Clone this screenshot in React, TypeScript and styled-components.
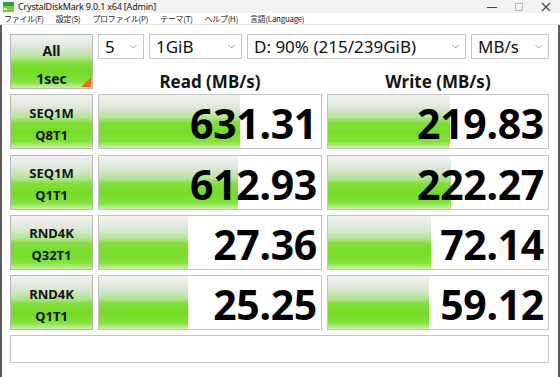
import React from "react"
import styled, { createGlobalStyle } from "styled-components"

const GlobalStyle = createGlobalStyle`
    html, body {
        margin: 0;
        padding: 0;
        background: #ffffff;
    }
    body {
        font-family: "Noto Sans", "Noto Sans CJK JP", sans-serif;
    }
`

type Result = {
    name: string
    sub: string
    read: string
    write: string
    readBar: number
    writeBar: number
}

const results: Result[] = [
    { name: "SEQ1M", sub: "Q8T1", read: "631.31", write: "219.83", readBar: 63.5, writeBar: 55.5 },
    { name: "SEQ1M", sub: "Q1T1", read: "612.93", write: "222.27", readBar: 62.5, writeBar: 56 },
    { name: "RND4K", sub: "Q32T1", read: "27.36", write: "72.14", readBar: 40, writeBar: 47 },
    { name: "RND4K", sub: "Q1T1", read: "25.25", write: "59.12", readBar: 40, writeBar: 46 },
]

const menus = ["ファイル(F)", "設定(S)", "プロファイル(P)", "テーマ(T)", "ヘルプ(H)", "言語(Language)"]

const Chevron = () => (
    <svg width="7" height="5" viewBox="0 0 7 5">
        <path d="M0.5 1 L3.5 4 L6.5 1" fill="none" stroke="#9a9a9a" strokeWidth="1" />
    </svg>
)

const Combo = ({ width, value }: { width: number; value: string }) => (
    <ComboBox $width={width}>
        <span>{value}</span>
        <Chevron />
    </ComboBox>
)

export default function App() {
    return (
        <>
            <GlobalStyle />
            <Window>
                <TitleBar>
                    <AppIcon width="11" height="10" viewBox="0 0 11 10">
                        <rect x="0" y="0" width="11" height="4" fill="#2f9e44" />
                        <rect x="0" y="4" width="11" height="6" fill="#7fcf3a" />
                        <rect x="1" y="6" width="3" height="2" fill="#e0f5c8" />
                    </AppIcon>
                    <Title>CrystalDiskMark 9.0.1 x64 [Admin]</Title>
                    <WindowButtons>
                        <svg width="10" height="10" viewBox="0 0 10 10">
                            <path d="M0 5.5 H10" stroke="#444" strokeWidth="1" />
                        </svg>
                        <svg width="10" height="10" viewBox="0 0 10 10">
                            <rect x="1.5" y="1.5" width="7" height="7" fill="none" stroke="#b8b8b8" strokeWidth="1" />
                        </svg>
                        <svg width="10" height="10" viewBox="0 0 10 10">
                            <path d="M1 1 L9 9 M9 1 L1 9" stroke="#444" strokeWidth="1.1" />
                        </svg>
                    </WindowButtons>
                </TitleBar>
                <MenuBar>
                    {menus.map((m) => (
                        <MenuItem key={m}>{m}</MenuItem>
                    ))}
                </MenuBar>
                <Client>
                    <Grid>
                        <AllButton>
                            <span>All</span>
                            <span>1sec</span>
                        </AllButton>
                        <TopArea>
                            <Combos>
                                <Combo width={46} value="5" />
                                <Combo width={93} value="1GiB" />
                                <Combo width={219} value="D: 90% (215/239GiB)" />
                                <Combo width={78} value="MB/s" />
                            </Combos>
                            <Headers>
                                <Header>Read (MB/s)</Header>
                                <Header>Write (MB/s)</Header>
                            </Headers>
                        </TopArea>
                        {results.map((r, i) => (
                            <React.Fragment key={i}>
                                <TestLabel>
                                    <span>{r.name}</span>
                                    <span>{r.sub}</span>
                                </TestLabel>
                                <Meter>
                                    <Bar style={{ width: `${r.readBar}%` }} />
                                    <Value>{r.read}</Value>
                                </Meter>
                                <Meter>
                                    <Bar style={{ width: `${r.writeBar}%` }} />
                                    <Value>{r.write}</Value>
                                </Meter>
                            </React.Fragment>
                        ))}
                        <Comment />
                    </Grid>
                </Client>
            </Window>
        </>
    )
}

const Window = styled.div`
    width: 560px;
    height: 377px;
    display: flex;
    flex-direction: column;
    background: #ffffff;
    overflow: hidden;
`

const TitleBar = styled.div`
    height: 15px;
    display: flex;
    align-items: center;
    background: #f3f3f3;
    padding-left: 3px;
`

const AppIcon = styled.svg`
    flex: none;
`

const Title = styled.div`
    margin-left: 4px;
    font-size: 9px;
    color: #1a1a1a;
    letter-spacing: -0.2px;
`

const WindowButtons = styled.div`
    margin-left: auto;
    display: flex;
    align-items: center;
    gap: 17px;
    padding-right: 9px;
`

const MenuBar = styled.div`
    height: 12px;
    display: flex;
    align-items: center;
    gap: 12px;
    padding-left: 4px;
    background: #ffffff;
    border-bottom: 1px solid #e2e2e2;
`

const MenuItem = styled.span`
    font-family: "Noto Sans CJK JP", sans-serif;
    font-size: 8px;
    color: #1a1a1a;
    letter-spacing: -0.3px;
`

const Client = styled.div`
    flex: 1;
    border-left: 2px solid #5a5a5a;
    border-right: 2px solid #5a5a5a;
    border-bottom: 2px solid #5a5a5a;
    padding: 9px 0 0 8px;
    background: #ffffff;
`

const Grid = styled.div`
    display: grid;
    grid-template-columns: 83px 224px 222px;
    grid-auto-rows: 55px;
    column-gap: 5px;
    row-gap: 5.3px;
`

const greenLabel = `
    linear-gradient(
        to bottom,
        #f1f2f1 0%,
        #dfe8da 22%,
        #b6e29a 42%,
        #82de3c 52%,
        #74dc24 70%,
        #82e23c 88%,
        #c6f2a8 100%
    )
`

const LabelBase = styled.div`
    box-sizing: border-box;
    border: 1px solid #b8b8b8;
    background: ${greenLabel};
    display: flex;
    flex-direction: column;
    align-items: center;
    justify-content: center;
    gap: 6px;
    font-weight: 700;
    color: #141414;
    padding-top: 4px;
`

const AllButton = styled(LabelBase)`
    position: relative;
    font-size: 14px;
    line-height: 16px;
    gap: 12px;
    padding-top: 6px;
    &::after {
        content: "";
        position: absolute;
        right: 1px;
        bottom: 1px;
        border-style: solid;
        border-width: 0 0 10px 10px;
        border-color: transparent transparent #f07010 transparent;
    }
`

const TestLabel = styled(LabelBase)`
    font-size: 13px;
    line-height: 16px;
`

const TopArea = styled.div`
    grid-column: 2 / span 2;
    display: flex;
    flex-direction: column;
`

const Combos = styled.div`
    display: flex;
    gap: 5px;
    height: 26px;
`

const ComboBox = styled.div<{ $width: number }>`
    box-sizing: border-box;
    width: ${(p) => p.$width}px;
    border: 1px solid #c8c8c8;
    background: #ffffff;
    display: flex;
    align-items: center;
    justify-content: space-between;
    padding: 0 6px 0 6px;
    font-size: 17px;
    color: #111;
`

const Headers = styled.div`
    flex: 1;
    display: grid;
    grid-template-columns: 224px 222px;
    column-gap: 5px;
    align-items: center;
    padding-top: 11px;
`

const Header = styled.div`
    text-align: center;
    font-size: 17px;
    font-weight: 700;
    color: #141414;
`

const Meter = styled.div`
    box-sizing: border-box;
    position: relative;
    border: 1px solid #c4c4c4;
    background: #ffffff;
    display: flex;
    align-items: center;
    justify-content: flex-end;
`

const Bar = styled.div`
    position: absolute;
    left: 0;
    top: 0;
    bottom: 0;
    background: ${greenLabel};
`

const Value = styled.div`
    position: relative;
    font-size: 41px;
    font-weight: 700;
    color: #000;
    letter-spacing: -0.3px;
    padding-right: 4px;
    padding-top: 3px;
    line-height: 50px;
`

const Comment = styled.div`
    grid-column: 1 / span 3;
    height: 28px;
    box-sizing: border-box;
    border: 1px solid #c4c4c4;
    background: #ffffff;
`
